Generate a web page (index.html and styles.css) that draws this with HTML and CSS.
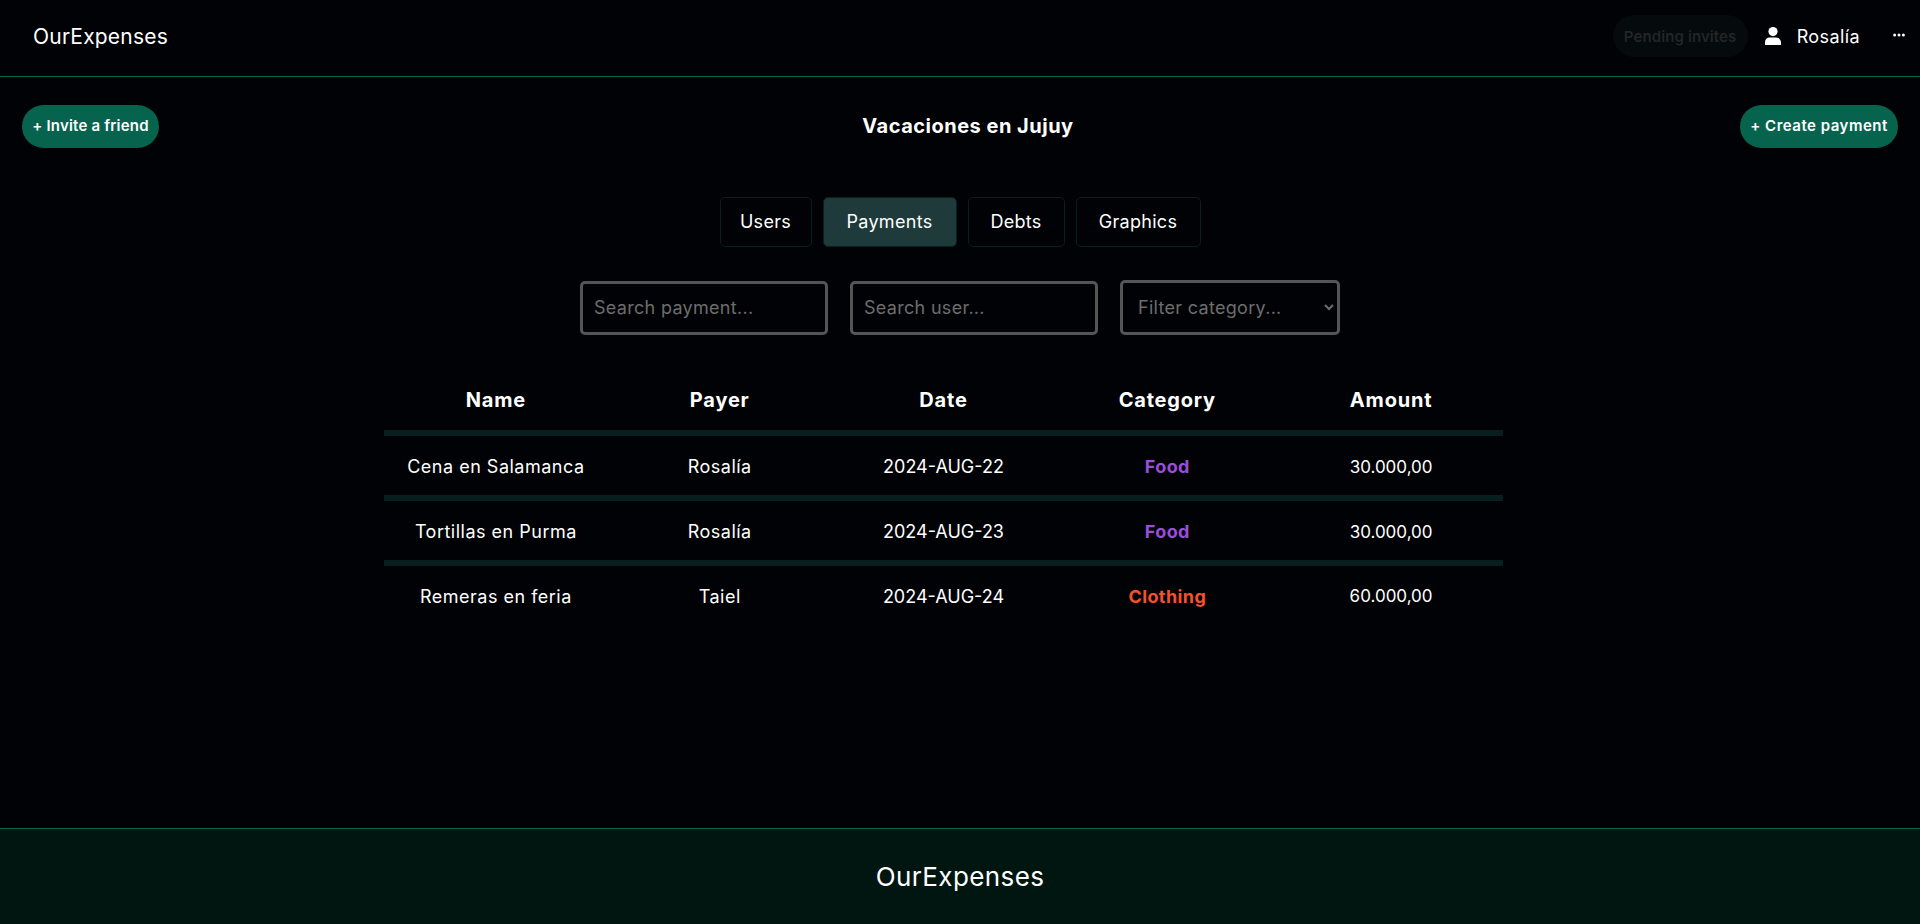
FILE: index.html
```html
<!DOCTYPE html>
<html lang="en">
<head>
  <meta charset="UTF-8">
  <title>OurExpenses</title>
  <link rel="stylesheet" href="styles.css">
</head>
<body>
  <header class="navbar">
    <span class="brand">OurExpenses</span>
    <div class="nav-right">
      <button class="pending-btn" disabled>Pending invites</button>
      <svg class="user-icon" viewBox="0 0 16 18" aria-hidden="true">
        <circle cx="8" cy="4.6" r="4.6"/>
        <path d="M0 18v-2.6C0 12.6 2.2 10.6 4.8 10.6h6.4c2.6 0 4.8 2 4.8 4.8V18z"/>
      </svg>
      <span class="user-name">Rosalía</span>
      <svg class="more-icon" viewBox="0 0 12 4" aria-hidden="true">
        <circle cx="1.6" cy="2" r="1.5"/>
        <circle cx="6" cy="2" r="1.5"/>
        <circle cx="10.4" cy="2" r="1.5"/>
      </svg>
    </div>
  </header>

  <main class="content">
    <!-- Group title row -->
    <div class="title-row">
      <button class="pill-btn invite-btn">+ Invite a friend</button>
      <h1 class="group-title">Vacaciones en Jujuy</h1>
      <button class="pill-btn create-btn">+ Create payment</button>
    </div>

    <div class="tabs">
      <button class="tab tab-users">Users</button>
      <button class="tab tab-payments active">Payments</button>
      <button class="tab tab-debts">Debts</button>
      <button class="tab tab-graphics">Graphics</button>
    </div>

    <div class="filters">
      <input class="filter-input" type="text" placeholder="Search payment...">
      <input class="filter-input" type="text" placeholder="Search user...">
      <select class="filter-select">
        <option>Filter category...</option>
      </select>
    </div>

    <!-- Payments -->
    <table class="payments">
      <thead>
        <tr>
          <th>Name</th>
          <th>Payer</th>
          <th>Date</th>
          <th>Category</th>
          <th>Amount</th>
        </tr>
      </thead>
      <tbody>
        <tr>
          <td class="cell-text">Cena en Salamanca</td>
          <td class="cell-text">Rosalía</td>
          <td class="cell-date">2024-AUG-22</td>
          <td class="cat-food">Food</td>
          <td>30.000,00</td>
        </tr>
        <tr>
          <td class="cell-text">Tortillas en Purma</td>
          <td class="cell-text">Rosalía</td>
          <td class="cell-date">2024-AUG-23</td>
          <td class="cat-food">Food</td>
          <td>30.000,00</td>
        </tr>
        <tr>
          <td class="cell-text">Remeras en feria</td>
          <td class="cell-text">Taiel</td>
          <td class="cell-date">2024-AUG-24</td>
          <td class="cat-clothing">Clothing</td>
          <td>60.000,00</td>
        </tr>
      </tbody>
    </table>
  </main>

  <footer class="footer">OurExpenses</footer>
</body>
</html>
```

FILE: styles.css
```css
* {
  box-sizing: border-box;
}

body {
  margin: 0;
  height: 100vh;
  display: flex;
  flex-direction: column;
  background-color: #000205;
  color: #fff;
  font-family: "Inter", "Liberation Sans", sans-serif;
}

button {
  font-family: inherit;
}

.navbar {
  height: 77px;
  flex-shrink: 0;
  display: flex;
  justify-content: space-between;
  align-items: center;
  padding: 0 15px 4px 33px;
  border-bottom: 1px solid #06644e;
}

.brand {
  font-size: 21px;
  font-weight: 400;
  letter-spacing: 0.2px;
}

.nav-right {
  display: flex;
  align-items: center;
}

.pending-btn {
  width: 135px;
  height: 42px;
  border: none;
  border-radius: 21px;
  background-color: #050a0c;
  color: #212626;
  font-size: 15px;
  font-weight: 600;
  letter-spacing: 0.1px;
  padding: 0;
}

.user-icon {
  width: 16px;
  height: 18px;
  margin-left: 17px;
  fill: #fff;
}

.user-name {
  margin-left: 16px;
  font-size: 18px;
  letter-spacing: 0.4px;
}

.more-icon {
  width: 12px;
  height: 4px;
  margin: 0 0 2px 33px;
  fill: #fff;
}

.content {
  flex: 1;
  display: flex;
  flex-direction: column;
  align-items: center;
}

.title-row {
  width: 100%;
  display: flex;
  justify-content: space-between;
  align-items: center;
  padding: 28px 22px 0;
}

.group-title {
  margin: 0 0 2px 37px;
  font-size: 20px;
  font-weight: 700;
  letter-spacing: 0.5px;
}

.pill-btn {
  height: 43px;
  padding: 0 0 2px;
  border: none;
  border-radius: 22px;
  background-color: #06644e;
  color: #fff;
  font-size: 15px;
  font-weight: 600;
  letter-spacing: 0.2px;
}

.invite-btn {
  width: 137px;
}

.create-btn {
  width: 158px;
  letter-spacing: 0.5px;
}

.tabs {
  display: flex;
  gap: 11px;
  margin-top: 49px;
}

.tab {
  height: 50px;
  border: 1px solid #06201c;
  border-radius: 5px;
  background-color: transparent;
  color: #fff;
  font-size: 18px;
  letter-spacing: 0.3px;
  padding: 0 0 2px;
}

.tab-users {
  width: 92px;
}

.tab-payments {
  width: 134px;
}

.tab-debts {
  width: 97px;
}

.tab-graphics {
  width: 125px;
}

.tab.active {
  background-color: #1e3a3a;
}

.filters {
  display: flex;
  align-items: center;
  gap: 22px;
  margin-top: 33px;
}

.filter-input,
.filter-select {
  height: 54px;
  border: 3px solid #555;
  border-radius: 5px;
  background-color: transparent;
  color: #fff;
  font-family: inherit;
  font-size: 18px;
  letter-spacing: 0.3px;
  padding: 0 11px;
}

.filter-input {
  width: 248px;
}

.filter-input::placeholder {
  color: #6d6d6d;
}

.filter-select {
  width: 220px;
  height: 55px;
  color: #6d6d6d;
}

.payments {
  width: 1119px;
  margin: 36px 33px 0 0;
  border-collapse: collapse;
  table-layout: fixed;
}

.payments th,
.payments td {
  text-align: center;
  padding: 0;
}

.payments th {
  height: 62px;
  font-size: 20px;
  font-weight: 700;
  letter-spacing: 0.8px;
  padding-bottom: 2px;
  border-bottom: 6px solid #07201f;
}

.payments td {
  height: 65px;
  padding-top: 2px;
  font-size: 17px;
}

.payments tbody tr {
  border-bottom: 6px solid #07201f;
}

.payments tbody tr:last-child {
  border-bottom: none;
}

.payments tbody tr:last-child td {
  height: 61px;
}

.payments .cell-text {
  font-size: 18px;
  letter-spacing: 0.5px;
}

.payments .cell-date {
  font-size: 18px;
}

.payments .cat-food {
  color: #9b4ddb;
  font-size: 18px;
  font-weight: 700;
  letter-spacing: 0.4px;
}

.payments .cat-clothing {
  color: #f4512c;
  font-size: 18px;
  font-weight: 700;
  letter-spacing: 0.4px;
}

.footer {
  height: 96px;
  flex-shrink: 0;
  display: flex;
  justify-content: center;
  align-items: center;
  border-top: 1px solid #06644e;
  background-color: #011611;
  font-size: 26px;
  letter-spacing: 0.4px;
}
```
